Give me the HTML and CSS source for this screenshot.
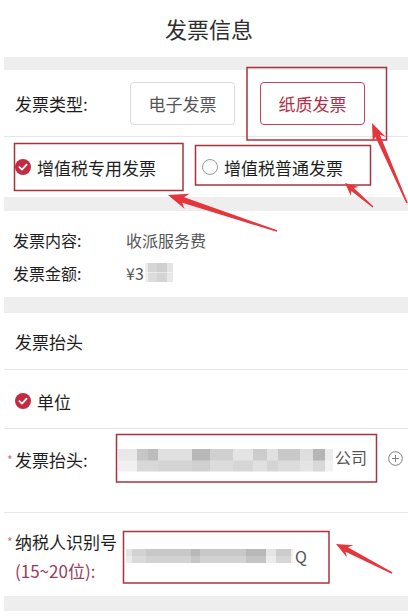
FILE: index.html
```html
<!DOCTYPE html>
<html lang="zh-CN">
<head>
<meta charset="utf-8">
<title>发票信息</title>
<link rel="stylesheet" href="styles.css">
</head>
<body>
<div class="page">
  <header class="title">发票信息</header>
  <div class="band band-a"></div>

  <section class="row type-row">
    <span class="label">发票类型:</span>
    <div class="btns">
      <span class="btn">电子发票</span>
      <span class="btn active">纸质发票</span>
    </div>
  </section>

  <section class="row radio-row">
    <span class="radio">
      <svg class="ico" width="16" height="16" viewBox="0 0 16 16"><circle cx="8" cy="8" r="8" fill="#c42b40"/><path d="M4.4 8.1 L7 10.6 L11.6 5.7" stroke="#fff" stroke-width="1.8" fill="none" stroke-linecap="round" stroke-linejoin="round"/></svg>
      增值税专用发票
    </span>
    <span class="radio second">
      <svg class="ico" width="16" height="16" viewBox="0 0 16 16"><circle cx="8" cy="8" r="7.5" fill="none" stroke="#9a9a9a" stroke-width="1"/></svg>
      增值税普通发票
    </span>
  </section>

  <div class="band band-b"></div>

  <section class="info">
    <div class="info-row"><span class="k">发票内容:</span><span class="v">收派服务费</span></div>
    <div class="info-row"><span class="k">发票金额:</span><span class="v">¥3<span class="blur blur-amount"></span></span></div>
  </section>

  <div class="band band-c"></div>

  <section class="row head-row">发票抬头</section>

  <section class="row unit-row">
    <svg class="ico" width="16" height="16" viewBox="0 0 16 16"><circle cx="8" cy="8" r="8" fill="#c42b40"/><path d="M4.4 8.1 L7 10.6 L11.6 5.7" stroke="#fff" stroke-width="1.8" fill="none" stroke-linecap="round" stroke-linejoin="round"/></svg>
    单位
  </section>

  <section class="row name-row">
    <span class="flabel"><i class="req">*</i>发票抬头:</span>
    <div class="finput name-input">
      <span class="blur blur-name"></span>
      <span class="ftext">公司</span>
    </div>
    <svg class="plus" width="15" height="15" viewBox="0 0 16 16"><circle cx="8" cy="8" r="7.3" fill="none" stroke="#777" stroke-width="1"/><path d="M8 4.3 V11.7 M4.3 8 H11.7" stroke="#777" stroke-width="1" fill="none"/></svg>
  </section>

  <section class="row tax-row">
    <div class="flabel two">
      <span><i class="req">*</i>纳税人识别号</span>
      <span class="hint">(15~20位):</span>
    </div>
    <div class="finput tax-input">
      <span class="blur blur-tax"></span>
      <span class="ftext">Q</span>
    </div>
  </section>

  <div class="band band-d"></div>
</div>

<svg class="annot" width="408" height="616" viewBox="0 0 408 616">
  <g fill="none" stroke="#a8333f" stroke-width="1.5">
    <rect x="247" y="67.5" width="139.5" height="72.5"/>
    <rect x="14.5" y="143.5" width="168.5" height="47"/>
    <rect x="195.5" y="145.5" width="175" height="39.5"/>
    <rect x="116.5" y="434.5" width="260" height="47.5"/>
    <rect x="123.5" y="531.5" width="205.5" height="51.5"/>
  </g>
  <g fill="#e5363c">
    <polygon points="372,123 385.63,136.69 379.9,134.83 407.73,202.68 406.27,203.32 375.32,136.83 372.81,142.31"/>
    <polygon points="345,183 358.77,186.9 353.89,187.99 373.46,206.47 372.54,207.53 351.29,191.03 350.97,196.02"/>
    <polygon points="168,195 189.5,193.67 184.13,197.17 277.25,230.24 276.75,231.76 182.25,202.87 184.48,208.87"/>
    <polygon points="336,544 353.43,545.14 347.81,547.3 392.37,572.29 391.63,573.71 345.51,551.74 346.99,557.58"/>
  </g>
</svg>
</body>
</html>
```

FILE: styles.css
```css
html, body {
  margin: 0;
  padding: 0;
}

body {
  width: 408px;
  height: 616px;
  overflow: hidden;
  position: relative;
  background: #ffffff;
  color: #222222;
  font-family: "Noto Sans CJK SC", "Noto Sans", "Liberation Sans", sans-serif;
}

.page {
  padding-left: 4px;
}

.title {
  height: 57px;
  line-height: 57px;
  text-align: center;
  font-size: 22px;
  color: #2e2e2e;
  padding-left: 6px;
}

.band {
  background: #eeeeee;
}
.band-a { height: 13px; }
.band-b { height: 14px; }
.band-c { height: 16px; }
.band-d { height: 15px; }

.row {
  box-sizing: border-box;
  display: flex;
  border-bottom: 1px solid #e6e6e6;
}

/* invoice type */
.type-row {
  height: 67px;
  align-items: center;
  padding-left: 11px;
}
.label {
  width: 115px;
  font-size: 17px;
  color: #1e1e1e;
}
.btns {
  display: flex;
  gap: 25px;
}
.btn {
  box-sizing: border-box;
  width: 105px;
  height: 43px;
  border: 1px solid #dcdcdc;
  border-radius: 4px;
  display: flex;
  align-items: center;
  justify-content: center;
  font-size: 17px;
  color: #555555;
}
.btn.active {
  border-color: #b8485e;
  color: #b0304a;
}

/* radio choices */
.radio-row {
  height: 60px;
  align-items: center;
  padding-left: 11px;
  border-bottom: none;
}
.radio {
  display: flex;
  align-items: center;
  gap: 6px;
  font-size: 17px;
  color: #1e1e1e;
}
.radio.second {
  margin-left: 46px;
}
.ico {
  display: block;
  flex: none;
}

/* info */
.info {
  padding: 12px 0 8px 9px;
}
.info-row {
  display: flex;
  align-items: center;
  height: 33px;
  font-size: 16px;
}
.k {
  width: 113px;
  color: #1e1e1e;
}
.v {
  display: flex;
  align-items: center;
  color: #555555;
}

.blur {
  display: block;
  flex: none;
}
.blur-amount {
  width: 28px;
  height: 19px;
  margin-left: 1px;
  background:
    linear-gradient(to right, #ececec 0 3px, #d6d6d6 3px 12px, #cfcfcf 12px 22px, #e4e4e4 22px 28px) top / 100% 50% no-repeat,
    linear-gradient(to right, #f0f0f0 0 3px, #dcdcdc 3px 12px, #d4d4d4 12px 22px, #e8e8e8 22px 28px) bottom / 100% 50% no-repeat;
}

/* title header */
.head-row {
  height: 57px;
  align-items: center;
  padding-left: 11px;
  font-size: 17px;
  color: #1e1e1e;
}
.unit-row {
  height: 59px;
  align-items: center;
  gap: 6px;
  padding-left: 11px;
  padding-top: 4px;
  font-size: 17px;
  color: #1e1e1e;
}

/* form fields */
.name-row {
  height: 84px;
  align-items: flex-start;
  padding-left: 3px;
}
.flabel {
  width: 109px;
  margin-top: 19px;
  line-height: 24px;
  font-size: 17px;
  color: #1e1e1e;
  white-space: nowrap;
}
.req {
  display: inline-block;
  width: 8px;
  font-style: normal;
  font-size: 12px;
  color: #c07a88;
  vertical-align: 2px;
}
.finput {
  box-sizing: border-box;
  display: flex;
  align-items: center;
}
.name-input {
  width: 260px;
  height: 48px;
  margin-top: 4px;
  padding-left: 2px;
}
.blur-name {
  width: 215px;
  height: 23px;
  margin-top: 6px;
  background:
    linear-gradient(to right, #e8e8e8 0 19px, #c6c6c6 19px 30px, #bcbcbc 30px 40px, #e0e0e0 40px 74px, #b8b8b8 74px 92px, #d0d0d0 92px 115px, #e4e4e4 115px 135px, #cccccc 135px 149px, #e0e0e0 149px 160px, #c8c8c8 160px 182px, #dedede 182px 195px, #b5b5b5 195px 207px, #ececec 207px 215px) top / 100% 50% no-repeat,
    linear-gradient(to right, #f0f0f0 0 19px, #d8d8d8 19px 40px, #d4d4d4 40px 74px, #d0d0d0 74px 92px, #dcdcdc 92px 115px, #d6d6d6 115px 135px, #e0e0e0 135px 149px, #d4d4d4 149px 160px, #dcdcdc 160px 182px, #e4e4e4 182px 195px, #d8d8d8 195px 207px, #f2f2f2 207px 215px) bottom / 100% 50% no-repeat;
}
.ftext {
  font-size: 16px;
  color: #555555;
  margin-left: 2px;
}
.plus {
  display: block;
  flex: none;
  margin-left: 12px;
  margin-top: 22px;
}

.tax-row {
  height: 83px;
  align-items: flex-start;
  padding-left: 3px;
  border-bottom: none;
}
.flabel.two {
  width: 116px;
  margin-top: 14px;
  line-height: 29px;
  display: flex;
  flex-direction: column;
}
.hint {
  padding-left: 8px;
  color: #9e3a5a;
}
.tax-input {
  width: 206px;
  height: 52px;
  margin-top: 17px;
  padding-left: 3px;
}
.blur-tax {
  width: 167px;
  height: 14px;
  background:
    linear-gradient(to right, #e4e4e4 0 6px, #d2d2d2 6px 20px, #c8c8c8 20px 65px, #b8b8b8 65px 74px, #c8c8c8 74px 120px, #b8b8b8 120px 140px, #e4e4e4 140px 150px, #cccccc 150px 165px, #f0f0f0 165px 167px) top / 100% 50% no-repeat,
    linear-gradient(to right, #ececec 0 6px, #dadada 6px 20px, #d2d2d2 20px 65px, #c6c6c6 65px 74px, #d2d2d2 74px 120px, #c4c4c4 120px 140px, #ececec 140px 150px, #d6d6d6 150px 165px, #f4f4f4 165px 167px) bottom / 100% 50% no-repeat;
}

/* annotation overlay */
.annot {
  position: absolute;
  top: 0;
  left: 0;
  pointer-events: none;
}
```
